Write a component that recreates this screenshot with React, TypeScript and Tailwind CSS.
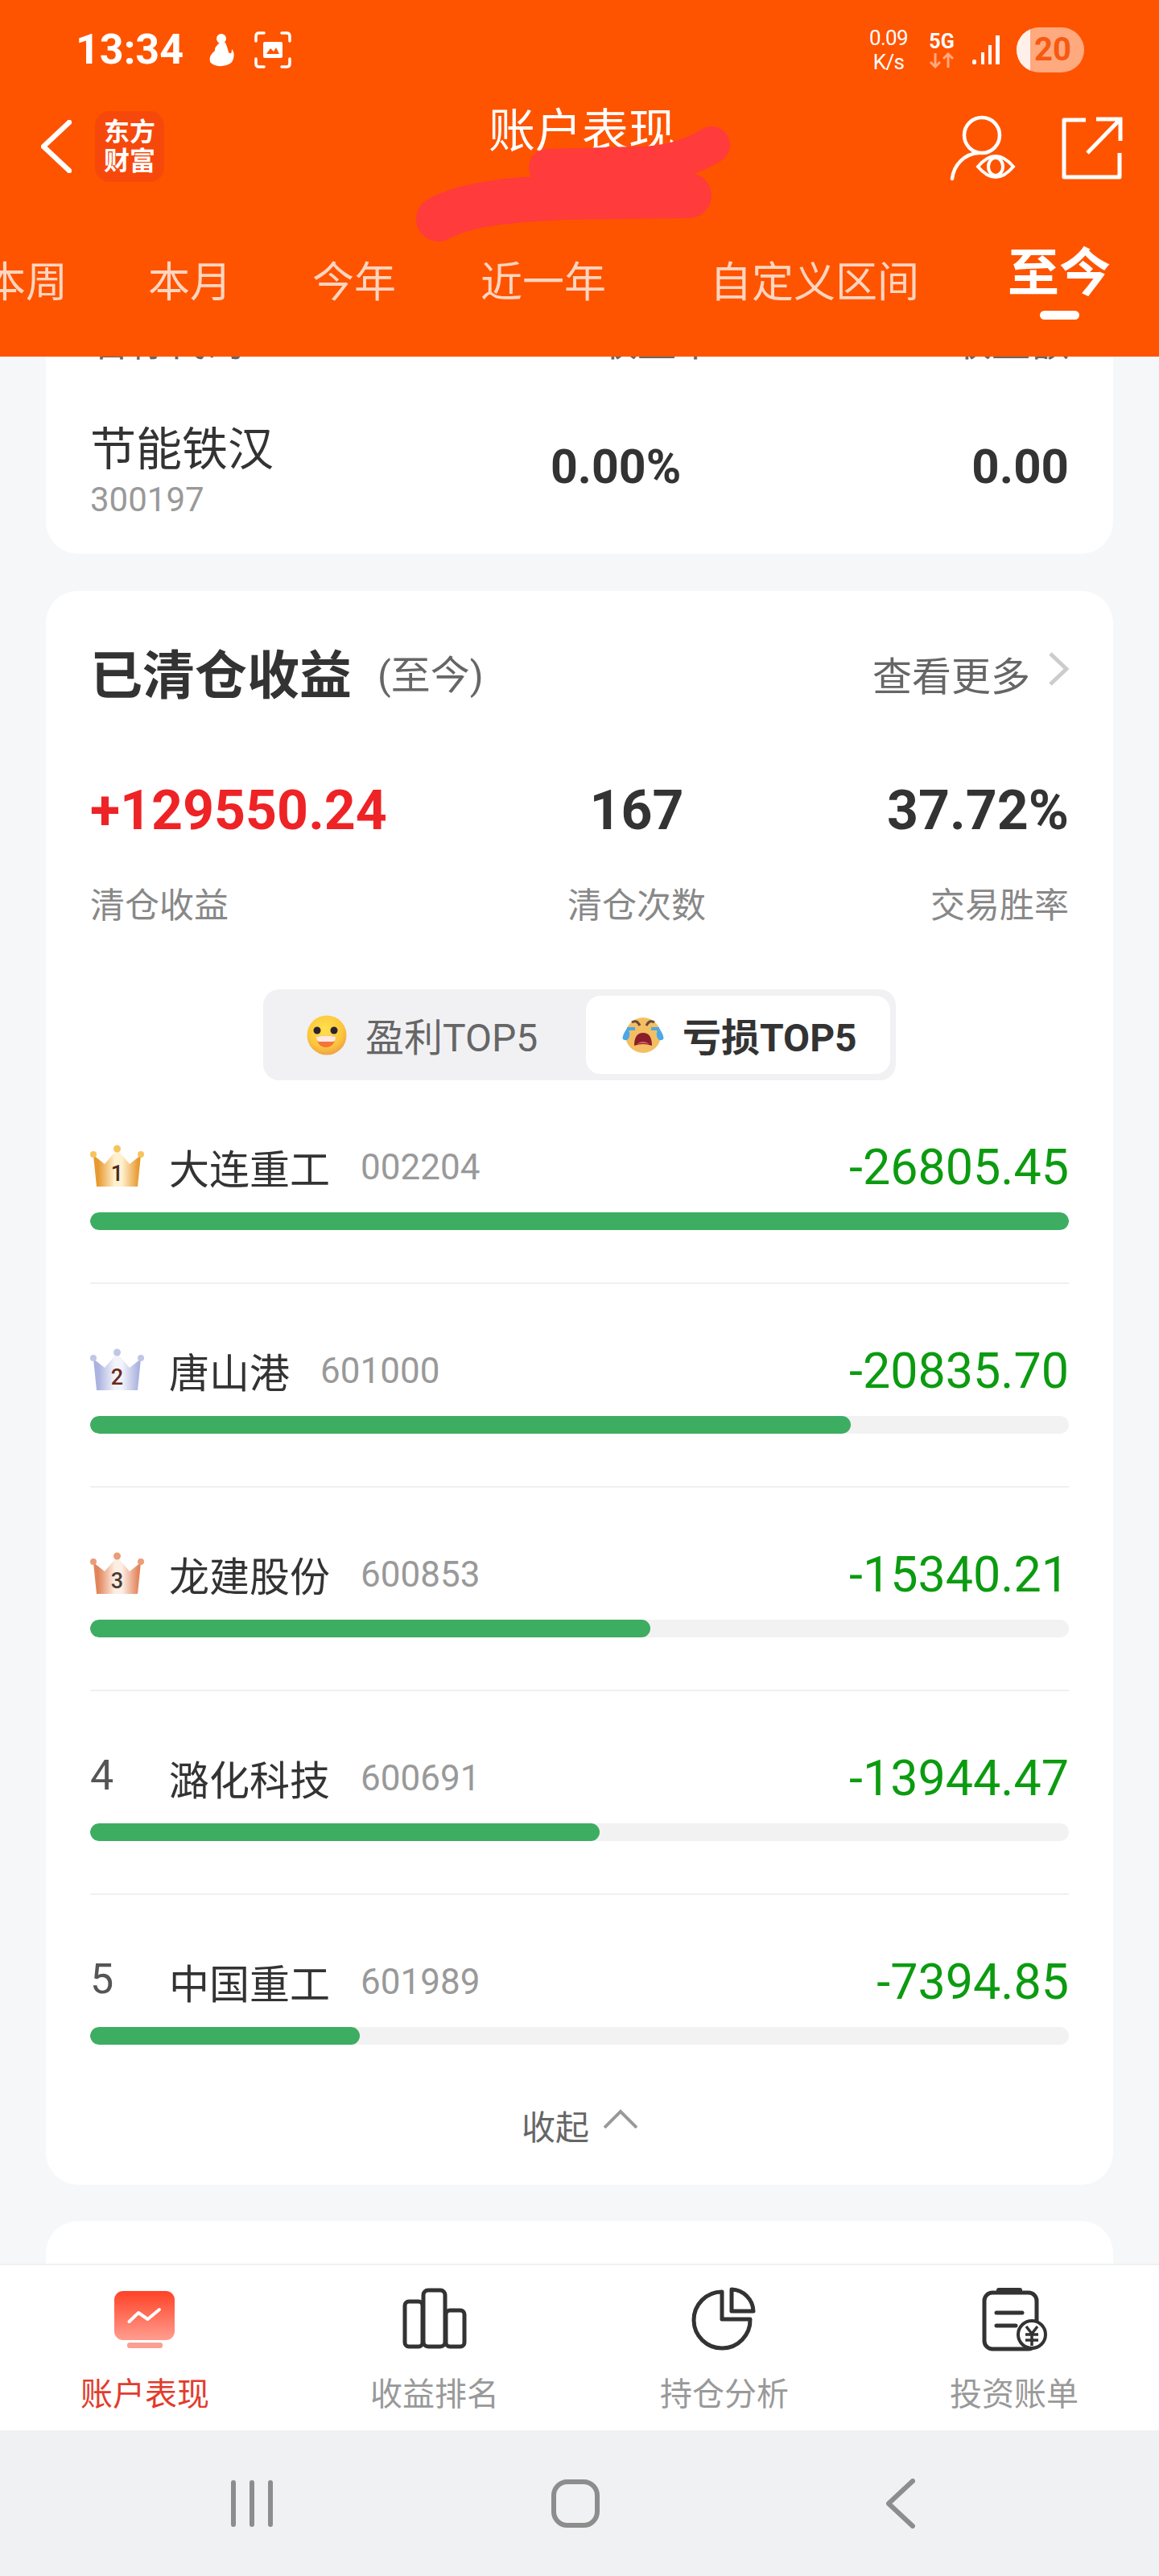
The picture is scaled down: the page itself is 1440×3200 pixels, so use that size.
import { ReactNode } from "react";

const tabs = [
  { label: "本周", cls: "-ml-[20px]" },
  { label: "本月", cls: "ml-[100px]" },
  { label: "今年", cls: "ml-[100px]" },
  { label: "近一年", cls: "ml-[105px]" },
  { label: "自定义区间", cls: "ml-[129px]" },
];

const losers = [
  { rank: 1, name: "大连重工", code: "002204", value: -26805.45 },
  { rank: 2, name: "唐山港", code: "601000", value: -20835.7 },
  { rank: 3, name: "龙建股份", code: "600853", value: -15340.21 },
  { rank: 4, name: "潞化科技", code: "600691", value: -13944.47 },
  { rank: 5, name: "中国重工", code: "601989", value: -7394.85 },
];

const crownColors: Record<number, { edge: string; mid: string; ball: string; num: string }> = {
  1: { edge: "#e8992f", mid: "#fff1cf", ball: "#f6c45c", num: "#4a2a1a" },
  2: { edge: "#aab2df", mid: "#f3f4fb", ball: "#c0c6e6", num: "#6a2a1c" },
  3: { edge: "#e2845a", mid: "#fdeee4", ball: "#eb9d78", num: "#4a3a36" },
};

const Crown = ({ rank }: { rank: number }) => {
  const c = crownColors[rank];
  const id = `crown-${rank}`;
  return (
    <svg width="67" height="54" viewBox="0 0 67 54" className="shrink-0">
      <defs>
        <linearGradient id={id} x1="0" y1="0" x2="1" y2="0">
          <stop offset="0.1" stopColor={c.edge} />
          <stop offset="0.45" stopColor={c.mid} />
          <stop offset="0.6" stopColor={c.mid} />
          <stop offset="0.95" stopColor={c.edge} />
        </linearGradient>
      </defs>
      <path d="M4 13 L18 24 L33.5 6 L49 24 L63 13 L59 52 L8 52 Z" fill={`url(#${id})`} />
      <circle cx="4" cy="12" r="4" fill={c.ball} />
      <circle cx="33.5" cy="5" r="4.5" fill={c.ball} />
      <circle cx="63" cy="12" r="4" fill={c.ball} />
      <text x="33.5" y="45" textAnchor="middle" fontSize="27" fontFamily="Roboto" fontWeight="500" fill={c.num}>
        {rank}
      </text>
    </svg>
  );
};

const SmileEmoji = () => (
  <svg width="50" height="50" viewBox="0 0 50 50" className="shrink-0">
    <defs>
      <radialGradient id="smile" cx="0.45" cy="0.35" r="0.7">
        <stop offset="0" stopColor="#ffe14d" />
        <stop offset="0.65" stopColor="#fcc63c" />
        <stop offset="1" stopColor="#ec9a48" />
      </radialGradient>
    </defs>
    <circle cx="25" cy="25" r="24.5" fill="url(#smile)" />
    <circle cx="13" cy="19" r="4.5" fill="#2c2230" />
    <circle cx="34" cy="19" r="4.5" fill="#2c2230" />
    <path d="M12 27 Q24 24 36 27 Q34 40 24 40 Q14 40 12 27 Z" fill="#f4743a" />
    <path d="M12 27 Q24 24 36 27 Q36 33 32 33 L16 33 Q12 33 12 27 Z" fill="#ffe9e2" />
  </svg>
);

const CryEmoji = () => (
  <svg width="56" height="46" viewBox="0 0 56 46" className="shrink-0">
    <circle cx="28" cy="23" r="22" fill="#f4bf63" />
    <path d="M14 7 Q20 3 24 11" stroke="#6a4a36" strokeWidth="3" fill="none" />
    <path d="M42 7 Q36 3 32 11" stroke="#6a4a36" strokeWidth="3" fill="none" />
    <path d="M9 13 Q1 24 3 28 Q7 31 10 27 Q13 22 9 13 Z" fill="#4aa8e8" />
    <path d="M47 13 Q55 24 53 28 Q49 31 46 27 Q43 22 47 13 Z" fill="#4aa8e8" />
    <path d="M8 13 H18 V17 H8 Z" fill="#4aa8e8" />
    <path d="M38 13 H48 V17 H38 Z" fill="#4aa8e8" />
    <path d="M17 36 Q17 20 28 20 Q39 20 39 36 Q28 32 17 36 Z" fill="#8a1f2a" />
    <path d="M20 34 Q28 28 36 34 Q28 32 20 34 Z" fill="#e8636a" />
  </svg>
);

const NavIcon = ({ children }: { children: ReactNode }) => (
  <svg width="80" height="80" viewBox="0 0 80 80" className="overflow-visible">
    {children}
  </svg>
);

const bottomTabs: { label: string; active?: boolean; icon: ReactNode }[] = [
  {
    label: "账户表现",
    active: true,
    icon: (
      <NavIcon>
        <defs>
          <linearGradient id="acct" x1="0" y1="0" x2="0" y2="1">
            <stop offset="0" stopColor="#ff4226" />
            <stop offset="1" stopColor="#ff9d8f" />
          </linearGradient>
        </defs>
        <rect x="2" y="6" width="75" height="61" rx="11" fill="url(#acct)" />
        <rect x="18" y="70" width="44" height="7" rx="3" fill="#fa9f93" />
        <path d="M20.5 44 L32 33 L43.5 41 L58 29" stroke="#fff" strokeWidth="4" fill="none" strokeLinecap="round" strokeLinejoin="round" />
      </NavIcon>
    ),
  },
  {
    label: "收益排名",
    icon: (
      <NavIcon>
        <g stroke="#333" strokeWidth="5" fill="none">
          <rect x="3" y="19" width="22" height="56" rx="5" />
          <rect x="26" y="5" width="27" height="70" rx="6" />
          <rect x="54" y="30" width="23" height="45" rx="5" />
        </g>
      </NavIcon>
    ),
  },
  {
    label: "持仓分析",
    icon: (
      <NavIcon>
        <g stroke="#333" strokeWidth="5" fill="none" strokeLinejoin="round">
          <path d="M37 7 A35 35 0 1 0 72 41 H37 Z" />
          <path d="M49 4 V31 H76 A28 28 0 0 0 49 4 Z" />
        </g>
      </NavIcon>
    ),
  },
  {
    label: "投资账单",
    icon: (
      <NavIcon>
        <rect x="3" y="8" width="65" height="70" rx="10" stroke="#333" strokeWidth="5" fill="none" />
        <rect x="18" y="2" width="32" height="8" rx="3" fill="#333" />
        <path d="M18 33 H50 M18 49 H42" stroke="#333" strokeWidth="5" strokeLinecap="round" />
        <circle cx="62" cy="60" r="17" stroke="#333" strokeWidth="4" fill="#fff" />
        <path d="M55 50 L62 59 L69 50 M54 60 H70 M54 67 H70 M62 59 V74" stroke="#333" strokeWidth="3.5" fill="none" />
      </NavIcon>
    ),
  },
];

export default function App() {
  const max = Math.abs(losers[0].value);

  return (
    <div className="relative w-[1440px] h-[3200px] overflow-hidden flex flex-col bg-[#f6f7f9] font-['Roboto','Noto_Sans_CJK_SC',sans-serif] text-[#333]">
      {/* Header */}
      <header className="relative z-10 h-[443px] shrink-0 bg-[#fe5400] text-white">
        {/* Status bar */}
        <div className="h-[124px] pl-[94px] pr-[93px] flex items-center justify-between">
          <div className="flex items-center">
            <span className="text-[52px] font-bold leading-none">13:34</span>
            <svg width="34" height="42" viewBox="0 0 34 42" className="ml-[30px]">
              <circle cx="17" cy="7" r="6" fill="#fff" />
              <path d="M15 12 Q8 18 9 22 Q1 28 3 36 Q8 42 18 41 Q30 40 32 32 Q34 24 30 20 Q30 28 26 24 Q24 16 22 12 Z" fill="#fff" />
            </svg>
            <svg width="46" height="46" viewBox="0 0 46 46" className="ml-[24px]" fill="none">
              <path d="M2 12 V6 Q2 2 6 2 H12 M34 2 H40 Q44 2 44 6 V12 M44 34 V40 Q44 44 40 44 H34 M12 44 H6 Q2 44 2 40 V34" stroke="#fff" strokeWidth="3.5" strokeLinecap="round" />
              <rect x="11" y="13" width="24" height="20" rx="2" fill="#fff" />
              <path d="M15 28 L20 21 L24 25 L27 20 L31 28 Z" fill="#fe5400" />
            </svg>
          </div>
          <div className="flex items-center">
            <div className="w-[56px] text-center text-[26px] leading-[30px] tracking-tight">
              <div>0.09</div>
              <div>K/s</div>
            </div>
            <div className="ml-[20px] w-[36px] flex flex-col items-center">
              <span className="text-[25px] font-bold leading-[26px]">5G</span>
              <svg width="34" height="20" viewBox="0 0 34 20" fill="none" stroke="#ffa97c" strokeWidth="3">
                <path d="M9 1 V18 M3 12 L9 18 L15 12 M25 19 V2 M19 8 L25 2 L31 8" />
              </svg>
            </div>
            <svg width="38" height="38" viewBox="0 0 38 38" className="ml-[20px]" fill="#fff">
              <rect x="0" y="31" width="5" height="6" rx="2" />
              <rect x="11" y="22" width="4" height="15" />
              <rect x="20" y="13" width="4" height="24" />
              <rect x="29" y="1" width="5" height="36" />
            </svg>
            <div className="relative ml-[17px] w-[84px] h-[56px] rounded-[28px] overflow-hidden bg-[#ffa97f] flex items-center justify-center">
              <div className="absolute left-0 top-0 bottom-0 w-[17px] bg-[#fff1e9]" />
              <span className="relative pl-[6px] text-[40px] font-bold leading-none text-[#f7590f]">20</span>
            </div>
          </div>
        </div>

        {/* Title row */}
        <div className="h-[116px] pl-[51px] pr-[45px] grid grid-cols-[1fr_auto_1fr] items-center">
          <div className="flex items-center">
            <svg width="38" height="66" viewBox="0 0 38 66" fill="none" stroke="#fff" strokeWidth="6.5" strokeLinecap="round" strokeLinejoin="round">
              <path d="M35 3 L3 33 L35 63" />
            </svg>
            <div className="ml-[29px] w-[86px] h-[88px] rounded-[18px] bg-[#f7480c] flex flex-col items-center justify-center text-[32px] font-bold leading-[36px]">
              <span>东方</span>
              <span>财富</span>
            </div>
          </div>
          <div className="self-start pt-[4px] text-[58px] leading-[70px]">账户表现</div>
          <div className="flex items-center justify-end mt-[3px]">
            <svg width="82" height="82" viewBox="0 0 82 82" fill="none" stroke="#fff" strokeWidth="4.5">
              <ellipse cx="40" cy="25" rx="22" ry="22" />
              <path d="M3 79 C5 62 18 48 36 47" strokeLinecap="round" />
              <path d="M35 64 Q57 38 79 64 Q57 90 35 64 Z" strokeWidth="4" />
              <ellipse cx="57" cy="64" rx="9" ry="11" strokeWidth="4" />
            </svg>
            <svg width="76" height="78" viewBox="0 0 76 78" className="ml-[57px]" fill="none" stroke="#fff" strokeWidth="5">
              <path d="M30 4 H3 V75 H72 V45" strokeLinejoin="round" />
              <path d="M32 45 L73 3 M43 3 H73 V30" />
            </svg>
          </div>
        </div>

        {/* Period tabs */}
        <div className="mt-[65px] flex items-start">
          {tabs.map((t) => (
            <span key={t.label} className={`mt-[15px] text-[52px] leading-[64px] text-[#ffd5bf] whitespace-nowrap ${t.cls}`}>
              {t.label}
            </span>
          ))}
          <div className="ml-[110px] flex flex-col items-center">
            <span className="text-[64px] font-bold leading-[70px]">至今</span>
            <div className="mt-[11px] w-[49px] h-[11px] rounded-full bg-white" />
          </div>
        </div>

        {/* Scribbled-out account name */}
        <svg width="1440" height="443" viewBox="0 0 1440 443" className="absolute left-0 top-0 pointer-events-none" fill="none" stroke="#ff3b3b" strokeLinecap="round" strokeLinejoin="round">
          <path d="M545 272 C580 252 640 248 700 245 L856 243" strokeWidth="56" />
          <path d="M680 208 L790 205 C830 205 860 195 884 180" strokeWidth="46" />
        </svg>
      </header>

      {/* Scrolling content */}
      <main className="flex-1 min-h-0 overflow-hidden px-[57px]">
        <section className="-mt-[100px] bg-white rounded-[40px] px-[55px] pt-[51px] pb-[43px]">
          <div className="grid grid-cols-[632px_1fr_auto] text-[48px] leading-[64px] text-[#666]">
            <span>名称代码</span>
            <span>收益率</span>
            <span>收益额</span>
          </div>
          <div className="mt-[63px] grid grid-cols-[572px_1fr_auto] items-center">
            <div>
              <div className="pt-[3px] text-[57px] leading-[70px]">节能铁汉</div>
              <div className="-mb-[3px] text-[42px] leading-[54px] text-[#999]">300197</div>
            </div>
            <span className="text-[59px] font-bold leading-[70px] -mt-[6px]">0.00%</span>
            <span className="text-[60px] font-bold leading-[70px] -mt-[6px]">0.00</span>
          </div>
        </section>

        <section className="mt-[46px] bg-white rounded-[40px] px-[55px] pt-[66px] pb-[42px]">
          <div className="h-[80px] flex items-center justify-between">
            <div className="flex items-center">
              <h2 className="text-[65px] font-bold leading-[80px]">已清仓收益</h2>
              <span className="ml-[32px] text-[49px] text-[#666]">(至今)</span>
            </div>
            <div className="flex items-center">
              <span className="pt-[3px] text-[49px] text-[#666]">查看更多</span>
              <svg width="26" height="42" viewBox="0 0 26 42" className="ml-[22px] -mt-[18px]" fill="none" stroke="#ccc" strokeWidth="5">
                <path d="M3 2 L23 21 L3 40" />
              </svg>
            </div>
          </div>

          <div className="mt-[87px] grid grid-cols-3 items-start">
            <div>
              <div className="text-[68px] font-bold leading-[80px] text-[#ee2326]">+129550.24</div>
              <div className="mt-[48px] text-[43px] leading-[60px] text-[#888]">清仓收益</div>
            </div>
            <div className="text-center pl-[142px]">
              <div className="text-[68px] font-bold leading-[80px]">167</div>
              <div className="mt-[48px] text-[43px] leading-[60px] text-[#888]">清仓次数</div>
            </div>
            <div className="text-right">
              <div className="text-[68px] font-bold leading-[80px]">37.72%</div>
              <div className="mt-[48px] text-[43px] leading-[60px] text-[#888]">交易胜率</div>
            </div>
          </div>

          {/* Profit / loss switch */}
          <div className="mt-[74px] mx-auto w-[786px] h-[113px] rounded-[20px] bg-[#f1f1f3] p-[8px] pl-[54px] pr-[7px] flex items-center">
            <div className="flex-1 flex items-center">
              <SmileEmoji />
              <span className="ml-[23px] pt-[8px] text-[48px] text-[#666] whitespace-nowrap">盈利TOP5</span>
            </div>
            <div className="w-[378px] h-[97px] rounded-[18px] bg-white flex items-center pl-[43px]">
              <CryEmoji />
              <span className="ml-[21px] pt-[8px] text-[48px] font-bold whitespace-nowrap">亏损TOP5</span>
            </div>
          </div>

          {/* Ranking */}
          <ul className="mt-[75px]">
            {losers.map((r, i) => (
              <li key={r.code} className={i < losers.length - 1 ? "border-b-2 border-[#f0f0f0] pb-[65px] mb-[75px]" : ""}>
                <div className="h-[64px] flex items-center">
                  <div className="w-[98px] shrink-0">
                    {r.rank <= 3 ? <Crown rank={r.rank} /> : <span className="text-[52px] text-[#555] leading-[64px] -mt-[4px] block">{r.rank}</span>}
                  </div>
                  <span className="pt-[10px] text-[50px] leading-[64px]">{r.name}</span>
                  <span className="ml-[38px] pt-[2px] text-[44px] text-[#999] leading-[64px]">{r.code}</span>
                  <span className="ml-auto pt-[2px] text-[61px] leading-[64px] text-[#0c9b10]">{r.value.toFixed(2)}</span>
                </div>
                <div className="mt-[25px] h-[22px] rounded-full bg-[#f2f2f3] overflow-hidden">
                  <div className="h-full rounded-full bg-[#3dad62]" style={{ width: `${(Math.abs(r.value) / max) * 100}%` }} />
                </div>
              </li>
            ))}
          </ul>

          <div className="mt-[72px] h-[60px] flex items-center justify-center">
            <span className="pt-[3px] text-[42px] text-[#666]">收起</span>
            <svg width="42" height="24" viewBox="0 0 42 24" className="ml-[18px] -mt-[20px]" fill="none" stroke="#999" strokeWidth="4">
              <path d="M1 23 L21 3 L41 23" />
            </svg>
          </div>
        </section>

        <section className="mt-[45px] h-[200px] bg-white rounded-[40px]" />
      </main>

      {/* Bottom tabs */}
      <nav className="relative z-10 h-[207px] shrink-0 bg-white border-t-2 border-[#f0f1f3] grid grid-cols-4 pt-[26px]">
        {bottomTabs.map((t) => (
          <div key={t.label} className="flex flex-col items-center">
            {t.icon}
            <span className={`mt-[30px] text-[40px] leading-[50px] ${t.active ? "text-[#e23c2c]" : "text-[#999]"}`}>{t.label}</span>
          </div>
        ))}
      </nav>

      {/* System navigation */}
      <div className="relative z-10 h-[181px] shrink-0 bg-[#f0f1f3] flex items-center">
        <div className="ml-[287px] w-[52px] h-[58px] flex justify-between">
          <div className="w-[6px] h-full rounded-full bg-[#8d8d8d]" />
          <div className="w-[6px] h-full rounded-full bg-[#8d8d8d]" />
          <div className="w-[6px] h-full rounded-full bg-[#8d8d8d]" />
        </div>
        <div className="ml-[346px] w-[60px] h-[60px] rounded-[20px] border-[6px] border-[#8d8d8d]" />
        <svg width="36" height="62" viewBox="0 0 36 62" className="ml-[356px]" fill="none" stroke="#8d8d8d" strokeWidth="6" strokeLinecap="round" strokeLinejoin="round">
          <path d="M33 3 L3 31 L33 59" />
        </svg>
      </div>
    </div>
  );
}
